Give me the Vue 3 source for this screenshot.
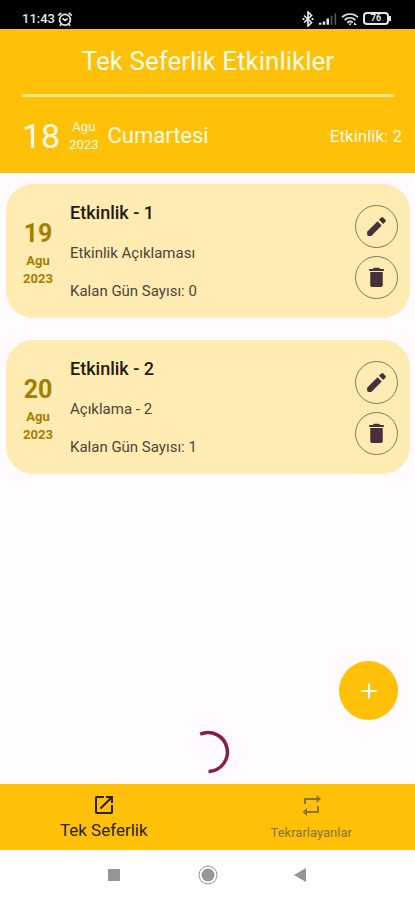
<script setup>
import { ref } from 'vue'

const today = { day: 18, month: 'Agu', year: 2023, weekday: 'Cumartesi' }

const events = ref([
  { id: 1, day: 19, month: 'Agu', year: 2023, title: 'Etkinlik - 1', description: 'Etkinlik Açıklaması', daysLeft: 0 },
  { id: 2, day: 20, month: 'Agu', year: 2023, title: 'Etkinlik - 2', description: 'Açıklama - 2', daysLeft: 1 },
])

const activeTab = ref('once')

function removeEvent(id) {
  events.value = events.value.filter((event) => event.id !== id)
}
</script>

<template>
  <div class="app" lang="tr">
    <div class="status">
      <div class="status-group">
        <span class="clock">11:43</span>
        <svg class="alarm" viewBox="0 0 16 16" aria-hidden="true">
          <circle cx="8" cy="8.8" r="5.4" />
          <path d="M5.600 7.400L8 9.400l2.600-1.800M1.200 4.600l3-2.800M14.800 4.600l-3-2.800M4.200 13.200l-1.400 1.600M11.800 13.200l1.400 1.600" />
        </svg>
      </div>
      <div class="status-group status-icons">
        <svg class="bluetooth" viewBox="0 0 12 16" aria-hidden="true">
          <path d="M2 4.5l7.5 7L6 15V1l3.500 3.500L2 11.500" />
          <path class="solid" d="M.6 7h1.800v2H.6zM9.600 7h1.800v2H9.600z" />
        </svg>
        <svg class="signal" viewBox="0 0 20 14" aria-hidden="true">
          <path class="on" d="M1 11h2.600v2H1zM5 9.500h2.600V13H5zM9 6.500h2.600V13H9z" />
          <path class="off" d="M13.500 3.500h1.600V13h-1.600zM17.500 1h1.600v12h-1.600z" />
        </svg>
        <svg class="wifi" viewBox="0 0 18 14" aria-hidden="true">
          <path d="M1 5.200c4.600-4.300 11.400-4.300 16 0M3.600 8c3.200-2.900 7.600-2.900 10.800 0M6.200 10.600c1.700-1.500 3.900-1.500 5.600 0" />
          <path class="solid" d="M7.200 11.400h3.600L9 13.600zM13 10l3 3h-3z" />
        </svg>
        <span class="battery">76</span>
      </div>
    </div>

    <header class="header">
      <h1 class="title">Tek Seferlik Etkinlikler</h1>
      <div class="summary">
        <span class="summary-day">{{ today.day }}</span>
        <span class="summary-month">
          <span>{{ today.month }}</span>
          <span>{{ today.year }}</span>
        </span>
        <span class="summary-weekday">{{ today.weekday }}</span>
        <span class="summary-count">Etkinlik: {{ events.length }}</span>
      </div>
    </header>

    <main class="content">
      <ul class="events">
        <li v-for="event in events" :key="event.id" class="card">
          <div class="card-date">
            <span class="card-day">{{ event.day }}</span>
            <span>{{ event.month }}</span>
            <span>{{ event.year }}</span>
          </div>
          <div class="card-body">
            <h2 class="card-title">{{ event.title }}</h2>
            <p>{{ event.description }}</p>
            <p>Kalan Gün Sayısı: {{ event.daysLeft }}</p>
          </div>
          <div class="card-actions">
            <button type="button" class="round" aria-label="Düzenle">
              <svg viewBox="0 0 24 24" aria-hidden="true">
                <path d="M3 17V19.500a1.500 1.500 0 0 0 1.500 1.500H7L17 11l-4-4L3 17zM20.600 7.400a1.300 1.300 0 0 0 0-1.800l-2.200-2.200a1.300 1.300 0 0 0-1.800 0l-2.200 2.200 4 4 2.200-2.200z" />
              </svg>
            </button>
            <button type="button" class="round" aria-label="Sil" @click="removeEvent(event.id)">
              <svg viewBox="0 0 24 24" aria-hidden="true">
                <path d="M6 6.800h12V19.500a1.500 1.500 0 0 1-1.500 1.500h-9a1.500 1.500 0 0 1-1.500-1.500zM19 3.800h-3.500l-1-1.100h-5l-1 1.100H5v2h14z" />
              </svg>
            </button>
          </div>
        </li>
      </ul>

      <svg class="spinner" viewBox="0 0 44 44" role="img" aria-label="Yükleniyor">
        <path d="M14.200 4.100A19.500 19.500 0 1 1 22.500 41.500" />
      </svg>

      <button type="button" class="fab" aria-label="Ekle">
        <svg viewBox="0 0 24 24" aria-hidden="true"><path d="M12 5v14M5 12h14" /></svg>
      </button>
    </main>

    <nav class="tabs">
      <button type="button" class="tab" :class="{ active: activeTab === 'once' }" @click="activeTab = 'once'">
        <svg viewBox="0 0 24 24" aria-hidden="true">
          <path d="M19 19H5V5h7V3H5a2 2 0 0 0-2 2v14a2 2 0 0 0 2 2h14a2 2 0 0 0 2-2v-7h-2v7zM14 3v2h3.590l-9.830 9.830 1.410 1.410L19 6.410V10h2V3h-7z" />
        </svg>
        <span>Tek Seferlik</span>
      </button>
      <button type="button" class="tab" :class="{ active: activeTab === 'repeat' }" @click="activeTab = 'repeat'">
        <svg viewBox="0 0 24 24" aria-hidden="true">
          <path d="M5 5h12.500V2L22 6l-4.500 4V7H7v4H5V5zM20 20H8v3l-4.500-4L8 15v3h10v-5h2v7z" />
        </svg>
        <span>Tekrarlayanlar</span>
      </button>
    </nav>

    <div class="system">
      <button type="button" aria-label="Son uygulamalar">
        <svg viewBox="0 0 20 20" aria-hidden="true"><path d="M3 4h12v12H3z" /></svg>
      </button>
      <button type="button" aria-label="Ana ekran">
        <svg viewBox="0 0 20 20" aria-hidden="true">
          <circle cx="10" cy="10" r="6.500" />
          <circle class="ring" cx="10" cy="10" r="9" />
        </svg>
      </button>
      <button type="button" aria-label="Geri">
        <svg viewBox="0 0 20 20" aria-hidden="true"><path d="M15 3v14L3 10z" /></svg>
      </button>
    </div>
  </div>
</template>

<style>
body {
  margin: 0;
  background: #fffbff;
}
</style>

<style scoped>
.app {
  display: flex;
  flex-direction: column;
  min-height: 100vh;
  background: #fffbff;
  color: #1f1a14;
  font-family: Roboto, "Noto Sans", sans-serif;
}

button {
  padding: 0;
  border: 0;
  background: none;
  color: inherit;
  font: inherit;
  cursor: pointer;
}

svg {
  display: block;
  fill: currentColor;
}

.status {
  display: flex;
  justify-content: space-between;
  align-items: center;
  box-sizing: border-box;
  height: 29px;
  padding: 8px 26px 0 22px;
  background: #000;
  color: #e8e8e8;
}

.status-group {
  display: flex;
  align-items: center;
  gap: 2px;
}

.status-icons {
  gap: 4px;
}

.status svg path,
.status svg circle {
  fill: none;
  stroke: currentColor;
  stroke-width: 1.7;
}

.status svg .solid,
.status svg .on,
.status svg .off {
  fill: currentColor;
  stroke: none;
}

.status svg .off {
  opacity: 0.4;
}

.clock {
  font-size: 13px;
  line-height: 16px;
  font-weight: 500;
}

.alarm {
  width: 16px;
  height: 16px;
}

.bluetooth {
  width: 12px;
  height: 16px;
}

.signal {
  width: 19px;
  height: 14px;
}

.wifi {
  width: 18px;
  height: 14px;
}

.battery {
  position: relative;
  box-sizing: border-box;
  width: 26px;
  height: 13px;
  border: 2px solid currentColor;
  border-radius: 4px;
  font-size: 9px;
  line-height: 9px;
  font-weight: 700;
  text-align: center;
}

.battery::after {
  content: "";
  position: absolute;
  top: 2px;
  right: -4px;
  width: 2px;
  height: 5px;
  background: currentColor;
}

.header {
  padding: 0 13px 0 22px;
  background: #ffc107;
  color: #fffbe9;
}

.title {
  margin: 0 8px 0 0;
  padding: 16px 0 17px;
  border-bottom: 3px solid #ffe38f;
  font-size: 26px;
  line-height: 32px;
  font-weight: 400;
  text-align: center;
}

.summary {
  display: flex;
  align-items: center;
  gap: 9px;
  height: 76px;
  padding-top: 2px;
  box-sizing: border-box;
}

.summary-day {
  font-size: 34px;
  line-height: 40px;
}

.summary-month {
  display: flex;
  flex-direction: column;
  align-items: center;
  font-size: 13px;
  line-height: 18px;
}

.summary-weekday {
  font-size: 22px;
  line-height: 28px;
}

.summary-count {
  margin-left: auto;
  font-size: 17px;
  line-height: 20px;
}

.content {
  position: relative;
  display: flex;
  flex: 1;
  flex-direction: column;
}

.events {
  display: flex;
  flex-direction: column;
  gap: 22px;
  margin: 0;
  padding: 11px 5px 0 6px;
  list-style: none;
}

.card {
  display: flex;
  align-items: center;
  box-sizing: border-box;
  min-height: 134px;
  padding: 18px 12px 16px;
  border-radius: 27px;
  background: #ffecb3;
}

.card-date {
  display: flex;
  flex-direction: column;
  align-items: center;
  width: 40px;
  margin-right: 12px;
  color: #a67c00;
  font-size: 13px;
  line-height: 18px;
  font-weight: 700;
}

.card-day {
  font-size: 25px;
  line-height: 36px;
}

.card-body {
  display: flex;
  flex: 1;
  flex-direction: column;
  gap: 18px;
  min-width: 0;
  color: #4d4536;
  font-size: 15px;
  line-height: 20px;
}

.card-body p {
  margin: 0;
}

.card-title {
  margin: 0 0 2px;
  color: #1f1a14;
  font-size: 18px;
  line-height: 20px;
  font-weight: 500;
}

.card-actions {
  display: flex;
  flex-direction: column;
  gap: 8px;
}

.round {
  display: grid;
  place-items: center;
  box-sizing: border-box;
  width: 43px;
  height: 43px;
  border: 1px solid #85765a;
  border-radius: 50%;
  color: #46303c;
}

.round svg {
  width: 25px;
  height: 25px;
}

.spinner {
  width: 44px;
  height: 44px;
  margin: auto auto 10px;
}

.spinner path {
  fill: none;
  stroke: #842149;
  stroke-width: 3.5;
}

.fab {
  position: absolute;
  right: 17px;
  bottom: 64px;
  display: grid;
  place-items: center;
  width: 59px;
  height: 59px;
  border-radius: 50%;
  background: #ffc107;
  color: #fff;
}

.fab svg {
  width: 26px;
  height: 26px;
  stroke: currentColor;
  stroke-width: 2;
}

.tabs {
  display: grid;
  grid-template-columns: 1fr 1fr;
  height: 66px;
  background: #ffc107;
}

.tab {
  display: flex;
  flex-direction: column;
  align-items: center;
  padding-top: 9px;
  color: #8a7436;
  font-size: 13px;
  line-height: 20px;
}

.tab svg {
  width: 24px;
  height: 24px;
  margin-bottom: 6px;
}

.tab.active {
  color: #2b2108;
  font-size: 17px;
}

.tab.active svg {
  margin-bottom: 3px;
}

.system {
  display: flex;
  justify-content: center;
  align-items: center;
  gap: 73px;
  height: 50px;
  background: #fff;
  color: #969696;
}

.system svg {
  width: 20px;
  height: 20px;
}

.ring {
  fill: none;
  stroke: currentColor;
}
</style>
